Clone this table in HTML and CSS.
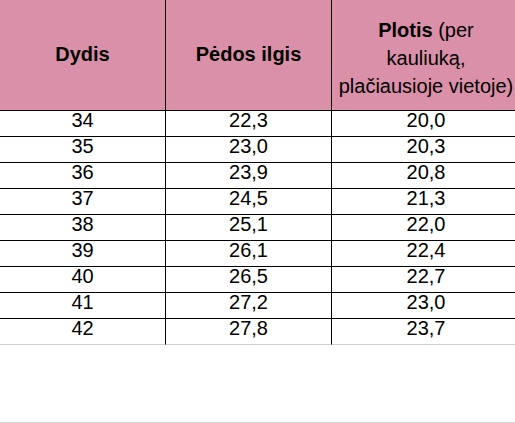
FILE: index.html
```html
<!DOCTYPE html>
<html lang="lt">
<head>
<meta charset="utf-8">
<title>Dydžių lentelė</title>
<link rel="stylesheet" href="styles.css">
</head>
<body>
<div class="sheet">
  <div class="head">Dydis</div>
  <div class="head">Pėdos ilgis</div>
  <div class="head head-wide"><span><b>Plotis</b> (per<br>kauliuką,<br>plačiausioje vietoje)</span></div>

  <div class="cell">34</div><div class="cell">22,3</div><div class="cell last-col">20,0</div>
  <div class="cell">35</div><div class="cell">23,0</div><div class="cell last-col">20,3</div>
  <div class="cell">36</div><div class="cell">23,9</div><div class="cell last-col">20,8</div>
  <div class="cell">37</div><div class="cell">24,5</div><div class="cell last-col">21,3</div>
  <div class="cell">38</div><div class="cell">25,1</div><div class="cell last-col">22,0</div>
  <div class="cell">39</div><div class="cell">26,1</div><div class="cell last-col">22,4</div>
  <div class="cell">40</div><div class="cell">26,5</div><div class="cell last-col">22,7</div>
  <div class="cell">41</div><div class="cell">27,2</div><div class="cell last-col">23,0</div>
  <div class="cell end-row">42</div><div class="cell end-row">27,8</div><div class="cell end-row last-col">23,7</div>

  <div class="spacer"></div>
</div>
</body>
</html>
```

FILE: styles.css
```css
html, body {
  margin: 0;
  padding: 0;
  overflow: hidden;
  background: #fff;
}

body {
  font-family: "Liberation Sans", Arial, sans-serif;
  font-size: 20px;
  color: #000;
}

.sheet {
  display: grid;
  grid-template-columns: 166px 166px 188px;
  grid-template-rows: 111px repeat(9, 26px) 78px;
  width: 520px;
}

.sheet > div {
  box-sizing: border-box;
}

.head {
  display: flex;
  align-items: center;
  justify-content: center;
  text-align: center;
  background: #da90a8;
  font-weight: bold;
  line-height: 28px;
  padding-bottom: 2px;
  border-right: 1px solid #000;
  border-bottom: 1px solid #000;
  white-space: nowrap;
}

.head-wide {
  font-weight: normal;
  padding-top: 8px;
  border-right: none;
}

.cell {
  text-align: center;
  line-height: 19px;
  border-right: 1px solid #000;
  border-bottom: 1px solid #000;
}

.cell.last-col {
  border-right: none;
}

.cell.end-row {
  border-bottom-color: #cfcfcf;
}

.spacer {
  grid-column: 1 / -1;
  border-bottom: 1px solid #d6d6d6;
}
```
